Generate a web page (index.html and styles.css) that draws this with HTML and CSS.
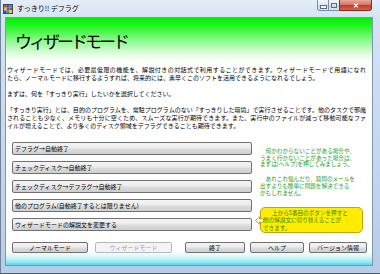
FILE: index.html
```
<!DOCTYPE html>
<html lang="ja">
<head>
<meta charset="utf-8">
<title>すっきり!! デフラグ - ウィザードモード</title>
<link rel="stylesheet" href="styles.css">
</head>
<body>
<div class="window">
<div class="titlebar">
<svg class="appicon" width="10" height="10" viewBox="0 0 10 10">
<rect x="0.5" y="0.5" width="9" height="9" fill="#fff" stroke="#404a60"/>
<rect x="1" y="1" width="2.7" height="2.7" fill="#d83a2a"/>
<rect x="3.7" y="1" width="2.7" height="2.7" fill="#2f55d4"/>
<rect x="6.4" y="1" width="2.6" height="2.7" fill="#2ea84a"/>
<rect x="1" y="3.7" width="2.7" height="2.7" fill="#f0c820"/>
<rect x="3.7" y="3.7" width="2.7" height="2.7" fill="#8a3cc0"/>
<rect x="6.4" y="3.7" width="2.6" height="2.7" fill="#d83a2a"/>
<rect x="1" y="6.4" width="2.7" height="2.6" fill="#2f55d4"/>
<rect x="3.7" y="6.4" width="2.7" height="2.6" fill="#2ea84a"/>
<rect x="6.4" y="6.4" width="2.6" height="2.6" fill="#f0c820"/>
</svg>
<span class="caption">すっきり!! デフラグ</span>
<div class="sysbtns">
<span class="sb sb-min"><i></i></span><span class="sb sb-max"><i></i></span><span class="sb sb-close">✕</span>
</div>
</div>

<div class="client">
<div class="header"><h1>ウィザードモード</h1></div>

<div class="intro">
<p><span class="ln">ウィザードモードでは、必要最低限の機能を、解説付きの対話式で利用することができます。ウィザードモードで用語になれ</span>たら、ノーマルモードに移行するようすれば、将来的には、素早くこのソフトを活用できるようになれるでしょう。</p>
<p>まずは、何を「すっきり実行」したいかを選択してください。</p>
<p class="last"><span class="ln">「すっきり実行」とは、目的のプログラムを、常駐プログラムのない「すっきりした環境」で実行させることです。他のタスクで邪魔</span><span class="ln">されることも少なく、メモリも十分に空くため、スムーズな実行が期待できます。また、実行中のファイルが減って移動可能なファ</span>イルが増えることで、より多くのディスク領域をデフラグできることも期待できます。</p>
</div>

<div class="main">
<div class="choices">
<div class="btn choice">デフラグ→自動終了</div>
<div class="btn choice">チェックディスク→自動終了</div>
<div class="btn choice">チェックディスク→デフラグ→自動終了</div>
<div class="btn choice">他のプログラム(自動終了するとは限りません)</div>
<div class="btn choice">ウィザードモードの解説文を変更する</div>
</div>
<div class="side">
<p class="note">何かわからないことがある場合や、<br>うまく行かないことがあった場合は、<br>まずは[ヘルプ]を押してみましょう。</p>
<p class="note">あれこれ悩んだり、質問のメールを<br>出すよりも簡単に問題を解決できる<br>かもしれません。</p>
<div class="callout">
<svg class="pointer" width="9" height="9" viewBox="0 0 9 9">
<polygon points="0.5,4.5 4.5,0.8 4.5,2.8 8.5,2.8 8.5,6.2 4.5,6.2 4.5,8.2" fill="#fffbd8" stroke="#b09a00" stroke-width="0.8"/>
</svg>
<p class="tip">上から5番目のボタンを押すと<br>他の解説文に切り替えることが<br>できます。</p>
</div>
</div>
</div>

<div class="footer">
<div class="group">
<div class="btn push w76">ノーマルモード</div>
<div class="btn push w77 disabled">ウィザードモード</div>
</div>
<div class="group right">
<div class="btn push w60">終了</div>
<div class="btn push w54">ヘルプ</div>
<div class="btn push w58">バージョン情報</div>
</div>
</div>
</div>
</div>
</body>
</html>
```
FILE: styles.css
```
/* すっきり!! デフラグ : wizard window */

html, body
{ margin: 0;
padding: 0;
}

body
{ width: 380px;
height: 274px;
overflow: hidden;
font-family: "Noto Sans CJK JP", "Noto Sans", sans-serif;
color: #000;
}

div.window
{ box-sizing: border-box;
width: 380px;
height: 274px;
display: flex;
flex-direction: column;
background: linear-gradient(to bottom, #e4edf8 0, #d5e3f2 18px, #c4d7ec 60%, #b7cde6 100%);
border-left: 1px solid #6f8299;
border-bottom: 1px solid #4e5e72;
}

/* Title bar */

div.titlebar
{ height: 17px;
flex: none;
display: flex;
align-items: center;
padding-left: 2px;
}

svg.appicon
{ flex: none;
margin-top: 1px;
}

span.caption
{ margin-left: 4px;
font-size: 7px;
line-height: 9px;
}

div.sysbtns
{ margin-left: auto;
margin-right: 8px;
align-self: flex-start;
display: flex;
}

span.sb
{ box-sizing: border-box;
height: 11px;
width: 12px;
display: flex;
align-items: center;
justify-content: center;
border: 1px solid #7a8ea8;
border-top: none;
margin-left: -1px;
background: linear-gradient(to bottom, #f3f7fc 0, #dfe8f3 50%, #c9d8ea 51%, #d8e5f3 100%);
}

span.sb-min
{ border-bottom-left-radius: 3px;
}

span.sb-min i
{ display: block;
width: 5px;
height: 2px;
margin-top: 3px;
background: #fff;
border: 1px solid #5a6c84;
}

span.sb-max i
{ display: block;
width: 4px;
height: 3px;
background: transparent;
border: 1px solid #5a6c84;
}

span.sb-close
{ width: 33px;
border-color: #8d2a22;
border-bottom-right-radius: 3px;
background: linear-gradient(to bottom, #e9a89c 0, #d8705f 50%, #c23a26 51%, #d4604a 100%);
color: #fff;
font-size: 7px;
font-weight: bold;
line-height: 1;
}

/* Client area */

div.client
{ flex: 1;
margin: 0 7px 7px 4px;
border: 1px solid #7f96b2;
background: #fff;
display: flex;
flex-direction: column;
min-height: 0;
}

div.header
{ height: 44px;
flex: none;
display: flex;
align-items: center;
padding-top: 1px;
box-sizing: border-box;
background: linear-gradient(to bottom, #00f000 0, #24f524 18%, #8ef98e 52%, #e2fde2 82%, #fff 100%);
}

div.header h1
{ margin: 0 0 0 9px;
font-size: 17px;
font-weight: normal;
letter-spacing: -3px;
line-height: 20px;
}

div.intro
{ padding: 4px 6px 0 1px;
flex: none;
}

div.intro p
{ margin: 0 0 8px 0;
font-size: 6px;
line-height: 8px;
white-space: nowrap;
}

div.intro p.last
{ margin-bottom: 0;
}

span.ln
{ display: block;
text-align: justify;
text-align-last: justify;
}

/* Choices and notes */

div.main
{ display: flex;
padding-top: 12px;
flex: none;
}

div.choices
{ width: 240px;
margin-left: 6px;
display: flex;
flex-direction: column;
gap: 6px;
}

.btn
{ box-sizing: border-box;
border: 1px solid #707070;
border-radius: 2px;
background: linear-gradient(to bottom, #f4f4f4 0, #ebebeb 48%, #dddddd 52%, #cfcfcf 100%);
font-size: 6px;
white-space: nowrap;
}

div.choice
{ height: 13px;
line-height: 11px;
padding-left: 2px;
}

div.side
{ width: 103px;
margin-left: 8px;
padding-top: 6px;
}

p.note
{ margin: 0 0 8px 0;
font-size: 5.6px;
line-height: 6.7px;
color: #1c9c1c;
text-indent: 1em;
white-space: nowrap;
}

div.callout
{ position: relative;
box-sizing: border-box;
height: 26px;
margin-top: 11px;
padding: 2px 4px 0 2px;
border: 1px solid #bba800;
border-radius: 5px;
background: #ffec00;
}

p.tip
{ margin: 0;
font-size: 5.6px;
line-height: 7.2px;
color: #2c8a00;
text-indent: 9px;
white-space: nowrap;
}

svg.pointer
{ position: absolute;
left: -6px;
top: 8px;
}

/* Bottom buttons */

div.footer
{ flex: 1;
display: flex;
padding: 9px 0 0 6px;
background: linear-gradient(to bottom, #fff 0, #fff 58%, #d6f7fb 75%, #8ee6f3 92%, #54d6ea 100%);
}

div.group
{ display: flex;
gap: 7px;
}

div.group.right
{ margin-left: 13px;
gap: 5px;
}

div.push
{ height: 11px;
line-height: 9px;
text-align: center;
}

div.push.disabled
{ border-color: #b5b9bd;
background: #f4f4f4;
color: #a2a2a2;
}

div.w76 { width: 76px; }
div.w77 { width: 77px; }
div.w60 { width: 60px; }
div.w54 { width: 54px; }
div.w58 { width: 58px; }
```
